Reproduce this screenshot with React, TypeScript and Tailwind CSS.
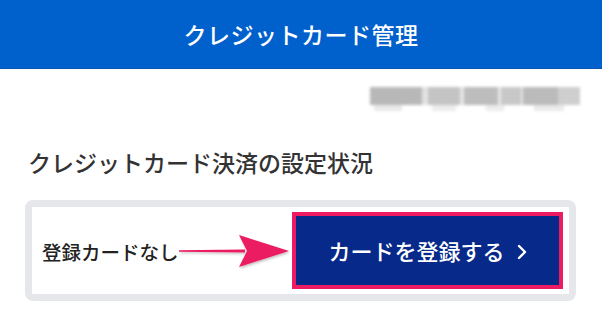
import React from 'react';

const font = { fontFamily: '"Noto Sans CJK JP", "Noto Sans", sans-serif' };

const blurBlocks = [
  { w: 52, c: 'bg-[#b8b8b8]' },
  { w: 6, c: 'bg-[#e2e2e2]' },
  { w: 32, c: 'bg-[#c4c4c4]' },
  { w: 4, c: 'bg-[#e6e6e6]' },
  { w: 34, c: 'bg-[#bdbdbd]' },
  { w: 3, c: 'bg-[#e8e8e8]' },
  { w: 20, c: 'bg-[#c8c8c8]' },
  { w: 2, c: 'bg-[#e6e6e6]' },
  { w: 35, c: 'bg-[#bbbbbb]' },
  { w: 22, c: 'bg-[#cfcfcf]' },
];

const Arrow = () => (
  <svg width="112" height="36" viewBox="0 0 112 36" className="shrink-0">
    <defs>
      <filter id="sh" x="-10%" y="-30%" width="130%" height="160%">
        <feDropShadow dx="1" dy="1.5" stdDeviation="1" floodColor="#000" floodOpacity="0.25" />
      </filter>
    </defs>
    <g filter="url(#sh)" fill="#ec1b62">
      <path d="M0 17.2 L66 16.4 L66 19.6 L0 18.8 Z" />
      <path d="M110 18 L60 2 L68 18 L60 34 Z" />
    </g>
  </svg>
);

export default function App() {
  return (
    <div className="w-[602px] h-[319px] bg-white overflow-hidden" style={font}>
      <header className="h-[69px] bg-[#0060cc] border-b border-[#0a57b0] flex items-center justify-center">
        <h1 className="text-white text-[23px] font-medium tracking-[0.5px] leading-none">クレジットカード管理</h1>
      </header>

      <div className="flex justify-end pr-[22px] mt-[18px]">
        <div className="flex flex-col blur-[1.5px]">
          <div className="flex h-[18px]">
            {blurBlocks.map((b, i) => (
              <div key={i} className={b.c} style={{ width: b.w }} />
            ))}
          </div>
          <div className="flex h-[6px] gap-[30px] pl-[4px] opacity-50">
            <div className="w-[28px] bg-[#d6d6d6]" />
            <div className="w-[24px] bg-[#dadada]" />
            <div className="w-[18px] bg-[#dadada]" />
            <div className="w-[30px] bg-[#d6d6d6]" />
          </div>
        </div>
      </div>

      <h2 className="mt-[35px] ml-[28px] text-[23px] leading-[32px] font-medium text-[#333333]">
        クレジットカード決済の設定状況
      </h2>

      <div className="mt-[22px] ml-[25px] w-[551px] rounded-[8px] border-[7px] border-[#e6e7eb] bg-white">
        <div className="flex items-center pl-[10px] pr-[6px] py-[5px]">
          <span className="text-[19.5px] font-medium text-[#222222] leading-none shrink-0 mt-[2px]">登録カードなし</span>
          <Arrow />
          <button className="ml-auto w-[271px] h-[77px] border-4 border-[#ec1b62] bg-[#07298a] text-white text-[22px] font-medium flex items-center justify-center gap-[12px]">
            <span>カードを登録する</span>
            <svg width="10" height="16" viewBox="0 0 10 16" className="mt-[2px]">
              <path d="M2 2 L8 8 L2 14" fill="none" stroke="white" strokeWidth="2.4" strokeLinecap="round" strokeLinejoin="round" />
            </svg>
          </button>
        </div>
      </div>
    </div>
  );
}
